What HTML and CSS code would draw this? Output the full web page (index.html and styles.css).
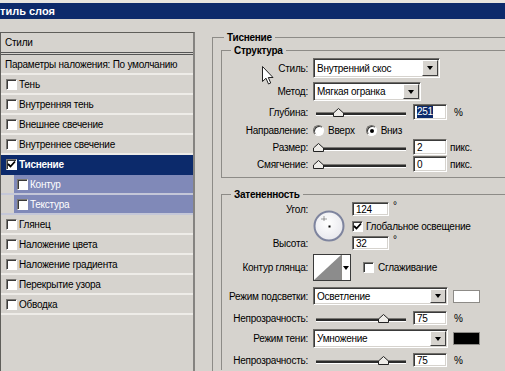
FILE: index.html
```html
<!DOCTYPE html>
<html lang="ru">
<head>
    <meta charset="UTF-8">
    <title>Стиль слоя</title>
    <link rel="stylesheet" href="styles.css">
</head>
<body>
    <div class="titlebar">тиль слоя</div>

    <div class="dialog">
        <div class="styles-list">
            <div class="list-head">Стили</div>
            <div class="list-row blend">Параметры наложения: По умолчанию</div>
            <div class="list-row"><span class="cb"></span>Тень</div>
            <div class="list-row"><span class="cb"></span>Внутренняя тень</div>
            <div class="list-row"><span class="cb"></span>Внешнее свечение</div>
            <div class="list-row"><span class="cb"></span>Внутреннее свечение</div>
            <div class="list-row selected">
                <span class="cb"><svg width="9" height="9" viewBox="0 0 9 9"><path d="M1 4 L3.5 6.5 L8 1.5" fill="none" stroke="#000" stroke-width="1.8"/></svg></span>Тиснение
            </div>
            <div class="list-row sub"><span class="cb"></span>Контур</div>
            <div class="list-row sub"><span class="cb"></span>Текстура</div>
            <div class="list-row"><span class="cb"></span>Глянец</div>
            <div class="list-row"><span class="cb"></span>Наложение цвета</div>
            <div class="list-row"><span class="cb"></span>Наложение градиента</div>
            <div class="list-row"><span class="cb"></span>Перекрытие узора</div>
            <div class="list-row"><span class="cb"></span>Обводка</div>
        </div>

        <fieldset class="group outer">
            <legend>Тиснение</legend>

            <fieldset class="group inner structure">
                <legend>Структура</legend>

                <div class="row r-style">
                    <span class="lbl">Стиль:</span>
                    <div class="select w-style"><span class="val">Внутренний скос</span><span class="drop"><i></i></span></div>
                </div>
                <div class="row r-method">
                    <span class="lbl">Метод:</span>
                    <div class="select w-method"><span class="val">Мягкая огранка</span><span class="drop"><i></i></span></div>
                </div>
                <div class="row r-depth">
                    <span class="lbl">Глубина:</span>
                    <div class="slider"><div class="track"></div><svg class="thumb" style="left:17px" width="11" height="9" viewBox="0 0 11 9"><path d="M5.5 0.5 L10.5 5 L10.5 8.5 L0.5 8.5 L0.5 5 Z" fill="#eeece8" stroke="#222"/></svg></div>
                    <div class="field"><span class="hl">251</span></div>
                    <span class="unit pct">%</span>
                </div>
                <div class="row r-dir">
                    <span class="lbl">Направление:</span>
                    <span class="radio"></span><span class="opt">Вверх</span>
                    <span class="radio on"></span><span class="opt">Вниз</span>
                </div>
                <div class="row r-size">
                    <span class="lbl">Размер:</span>
                    <div class="slider"><div class="track"></div><svg class="thumb" style="left:-3px" width="11" height="9" viewBox="0 0 11 9"><path d="M5.5 0.5 L10.5 5 L10.5 8.5 L0.5 8.5 L0.5 5 Z" fill="#eeece8" stroke="#222"/></svg></div>
                    <div class="field">2</div>
                    <span class="unit">пикс.</span>
                </div>
                <div class="row r-soft">
                    <span class="lbl">Смягчение:</span>
                    <div class="slider"><div class="track"></div><svg class="thumb" style="left:-3px" width="11" height="9" viewBox="0 0 11 9"><path d="M5.5 0.5 L10.5 5 L10.5 8.5 L0.5 8.5 L0.5 5 Z" fill="#eeece8" stroke="#222"/></svg></div>
                    <div class="field">0</div>
                    <span class="unit">пикс.</span>
                </div>
            </fieldset>

            <fieldset class="group inner shading">
                <legend>Затененность</legend>

                <div class="angle-grid">
                    <span class="lbl a-angle">Угол:</span>
                    <svg class="dial" width="32" height="32" viewBox="0 0 32 32">
                        <defs>
                            <radialGradient id="dialFill" cx="0.45" cy="0.4" r="0.7">
                                <stop offset="0" stop-color="#ffffff"/>
                                <stop offset="1" stop-color="#e4e4ea"/>
                            </radialGradient>
                        </defs>
                        <circle cx="16" cy="16" r="14.5" fill="url(#dialFill)" stroke="#7e849e" stroke-width="2"/>
                        <path d="M11 6.5 V11 M8.5 9 H13.5" stroke="#444" stroke-width="1" stroke-dasharray="1 1"/>
                        <rect x="15.5" y="15.5" width="2" height="2" fill="#000"/>
                    </svg>
                    <div class="a-field">
                        <div class="field w-angle">124</div><span class="deg">°</span>
                    </div>
                    <div class="a-check">
                        <span class="cb on"><svg width="9" height="9" viewBox="0 0 9 9"><path d="M1 4 L3.5 6.5 L8 1.5" fill="none" stroke="#000" stroke-width="1.8"/></svg></span>
                        <span class="opt">Глобальное освещение</span>
                    </div>
                    <span class="lbl a-height">Высота:</span>
                    <div class="a-field a-field2">
                        <div class="field w-angle">32</div><span class="deg">°</span>
                    </div>
                </div>

                <div class="row r-contour">
                    <span class="lbl">Контур глянца:</span>
                    <div class="contour">
                        <svg width="27" height="25" viewBox="0 0 27 25"><rect width="27" height="25" fill="#fff"/><path d="M0 25 L27 0 L27 25 Z" fill="#8c8c8c"/></svg>
                        <span class="cdrop"><i></i></span>
                    </div>
                    <span class="cb smooth"></span><span class="opt">Сглаживание</span>
                </div>
                <div class="row r-hmode">
                    <span class="lbl">Режим подсветки:</span>
                    <div class="select w-mode"><span class="val">Осветление</span><span class="drop"><i></i></span></div>
                    <span class="swatch white"></span>
                </div>
                <div class="row r-op1">
                    <span class="lbl">Непрозрачность:</span>
                    <div class="slider"><div class="track"></div><svg class="thumb" style="left:62px" width="11" height="9" viewBox="0 0 11 9"><path d="M5.5 0.5 L10.5 5 L10.5 8.5 L0.5 8.5 L0.5 5 Z" fill="#eeece8" stroke="#222"/></svg></div>
                    <div class="field">75</div>
                    <span class="unit pct">%</span>
                </div>
                <div class="row r-smode">
                    <span class="lbl">Режим тени:</span>
                    <div class="select w-mode"><span class="val">Умножение</span><span class="drop"><i></i></span></div>
                    <span class="swatch black"></span>
                </div>
                <div class="row r-op2">
                    <span class="lbl">Непрозрачность:</span>
                    <div class="slider"><div class="track"></div><svg class="thumb" style="left:62px" width="11" height="9" viewBox="0 0 11 9"><path d="M5.5 0.5 L10.5 5 L10.5 8.5 L0.5 8.5 L0.5 5 Z" fill="#eeece8" stroke="#222"/></svg></div>
                    <div class="field">75</div>
                    <span class="unit pct">%</span>
                </div>
            </fieldset>
        </fieldset>
    </div>

    <svg class="cursor" width="12" height="19" viewBox="0 0 12 19">
        <path d="M0.5 0.5 L0.5 15.5 L4 12.2 L6.5 18 L8.7 17 L6.3 11.5 L11 11.5 Z" fill="#fff" stroke="#222" stroke-width="1"/>
    </svg>
</body>
</html>
```

FILE: styles.css
```css
* {
    box-sizing: border-box;
}
html, body {
    margin: 0;
}
body {
    position: relative;
    width: 505px;
    height: 371px;
    overflow: hidden;
    background: #d6d3ce;
    font-family: "Liberation Sans", Arial, sans-serif;
    font-size: 10px;
    letter-spacing: -0.25px;
    color: #000;
}

/* title bar */
.titlebar {
    height: 19px;
    border-top: 3px solid #e6e4df;
    background: #0c2a6b;
    color: #fff;
    font-size: 11px;
    font-weight: bold;
    letter-spacing: 0;
    line-height: 16px;
    white-space: nowrap;
}

.dialog {
    display: flex;
    align-items: flex-start;
}

/* left list */
.styles-list {
    flex: none;
    width: 195px;
    height: 339px;
    margin-top: 13px;
    border: 1px solid #5f5e5a;
    border-right: 2px solid #858380;
    border-bottom: none;
    background: #d6d3ce;
}
.list-head {
    height: 22px;
    padding-left: 4px;
    line-height: 19px;
    border-bottom: 3px double #555;
}
.list-row {
    display: flex;
    align-items: center;
    height: 20px;
    padding-left: 5px;
    border-bottom: 2px solid #eeece8;
    white-space: nowrap;
}
.list-row.blend {
    padding-left: 4px;
}
.list-row.selected {
    background: #0c2a6b;
    border-bottom-color: #0c2a6b;
    color: #fff;
    font-weight: bold;
}
.list-row.sub {
    padding-left: 16px;
    color: #fff;
    background: linear-gradient(to right, #d6d3ce 13px, #8089b8 13px);
    border-bottom-color: #c4c7d8;
}

/* checkbox / radio */
.cb {
    display: inline-flex;
    align-items: center;
    justify-content: center;
    flex: none;
    width: 11px;
    height: 11px;
    margin-right: 2px;
    background: #fff;
    border: 1px solid;
    border-color: #7b7975 #fff #fff #7b7975;
    box-shadow: inset 1px 1px 0 #3a3a3a;
}
.radio {
    position: relative;
    flex: none;
    width: 11px;
    height: 11px;
    border-radius: 50%;
    background: #fff;
    border: 1px solid;
    border-color: #6f6d69 #fff #fff #6f6d69;
    box-shadow: inset 1px 1px 0 #3a3a3a;
}
.radio.on::after {
    content: "";
    position: absolute;
    left: 3px;
    top: 3px;
    width: 4px;
    height: 4px;
    border-radius: 50%;
    background: #000;
}

/* group boxes */
.group {
    margin: 0;
    padding: 0;
    min-width: 0;
    border: 1px solid #8d8b87;
    border-right: none;
}
.group > legend {
    padding: 0 3px;
    font-weight: bold;
    line-height: 13px;
}
.outer {
    flex: none;
    width: 293px;
    height: 340px;
    margin: 12px 0 0 17px;
    padding-left: 8px;
    border-bottom: none;
}
.outer > legend {
    margin-left: 3px;
}
.inner > legend {
    margin-left: 9px;
}
.structure {
    padding-bottom: 5px;
}
.shading {
    height: 182px;
    margin-top: 10px;
    border-bottom: none;
}

/* rows */
.row {
    display: flex;
    align-items: center;
    white-space: nowrap;
}
.lbl {
    flex: none;
    width: 86px;
    margin-right: 5px;
    text-align: right;
}
.r-style { height: 20px; margin-top: 1px; }
.r-method { height: 19px; margin-top: 4px; }
.r-depth { height: 16px; margin-top: 3px; }
.r-dir { height: 16px; margin-top: 2px; }
.r-size { height: 16px; margin-top: 1px; }
.r-soft { height: 16px; margin-top: 1px; }

.r-contour { height: 27px; margin-top: 4px; }
.r-hmode { height: 18px; margin-top: 6px; }
.r-op1 { height: 14px; margin-top: 6px; }
.r-smode { height: 19px; margin-top: 4px; }
.r-op2 { height: 14px; margin-top: 5px; }

/* select */
.select {
    display: flex;
    align-items: stretch;
    height: 100%;
    background: #fff;
    border: 1px solid;
    border-color: #6f6d69 #fff #fff #6f6d69;
    box-shadow: inset 1px 1px 0 #3a3a3a, inset -1px -1px 0 #d6d3ce;
}
.w-style { width: 127px; }
.w-method { width: 108px; }
.w-mode { width: 135px; }
.select .val {
    flex: 1;
    padding: 0 0 0 3px;
    display: flex;
    align-items: center;
}
.drop {
    display: flex;
    align-items: center;
    justify-content: center;
    width: 16px;
    margin: 1px 1px 1px 0;
    background: #d6d3ce;
    border: 1px solid;
    border-color: #fff #404040 #404040 #fff;
}
.drop i, .cdrop i {
    width: 0;
    height: 0;
    border-left: 3.5px solid transparent;
    border-right: 3.5px solid transparent;
    border-top: 4px solid #000;
}

/* slider */
.slider {
    position: relative;
    flex: none;
    width: 90px;
    height: 100%;
    margin: 0 7px 0 3px;
}
.track {
    position: absolute;
    left: 0;
    right: 0;
    top: 50%;
    height: 4px;
    border-top: 1px solid #7b7975;
    border-bottom: 1px solid #fff;
    background: #2b2b2b;
}
.thumb {
    position: absolute;
    top: calc(50% - 4px);
}

/* text fields */
.field {
    flex: none;
    width: 34px;
    height: 100%;
    padding-left: 3px;
    display: flex;
    align-items: center;
    background: #fff;
    border: 1px solid;
    border-color: #6f6d69 #fff #fff #6f6d69;
    box-shadow: inset 1px 1px 0 #3a3a3a, inset -1px -1px 0 #d6d3ce;
}
.hl {
    background: #0c2a6b;
    color: #fff;
    line-height: 12px;
}
.unit {
    margin-left: 3px;
}
.unit.pct {
    margin-left: 7px;
}
.opt {
    margin-left: 4px;
}
.r-dir .radio.on {
    margin-left: 11px;
}

/* angle block */
.angle-grid {
    display: grid;
    grid-template-columns: 86px 32px auto;
    grid-template-rows: 14px 16px 14px;
    column-gap: 5px;
    row-gap: 2px;
    margin-top: 1px;
    align-items: center;
}
.a-angle { grid-row: 1; grid-column: 1; }
.a-height { grid-row: 3; grid-column: 1; }
.dial {
    grid-row: 1 / 4;
    grid-column: 2;
    align-self: center;
}
.a-field {
    grid-row: 1;
    grid-column: 3;
    display: flex;
    height: 100%;
    margin-left: 2px;
}
.a-field2 { grid-row: 3; }
.a-check {
    grid-row: 2;
    grid-column: 3;
    display: flex;
    align-items: center;
    margin-left: 2px;
}
.a-check .opt { margin-left: 1px; }
.w-angle { width: 37px; }
.deg {
    margin-left: 4px;
    line-height: 8px;
}

/* contour preview */
.contour {
    display: flex;
    height: 100%;
    width: 38px;
    border: 1px solid #3a3a3a;
    background: #fff;
}
.contour svg {
    display: block;
}
.cdrop {
    flex: 1;
    display: flex;
    align-items: center;
    justify-content: center;
    background: #fff;
    border-left: 1px solid #8d8b87;
}
.cb.smooth {
    margin-left: 12px;
    margin-right: 0;
}

.swatch {
    flex: none;
    width: 27px;
    height: 13px;
    margin-left: 5px;
    border: 1px solid #8d8b87;
}
.swatch.white { background: #fff; }
.swatch.black { background: #000; }

/* mouse pointer over the dialog */
.cursor {
    position: absolute;
    left: 262px;
    top: 66px;
}
```
